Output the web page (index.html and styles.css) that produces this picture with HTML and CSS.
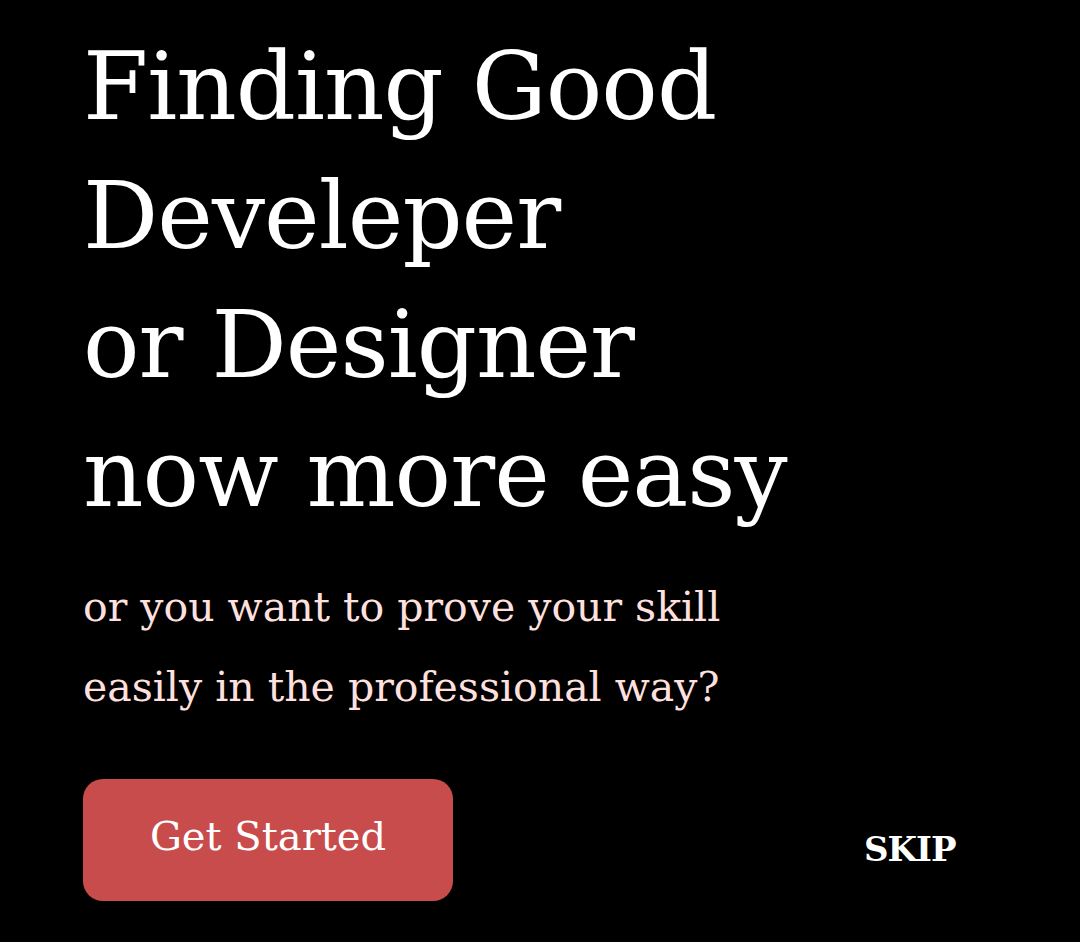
FILE: index.html
```html
<!DOCTYPE html>
<html>
<head>
<meta charset="utf-8">
<link rel="stylesheet" href="styles.css">
</head>
<body>
<main class="screen">
  <h1 class="headline">Finding Good<br>Develeper<br>or Designer<br>now more easy</h1>
  <p class="subtitle">or you want to prove your skill<br>easily in the professional way?</p>
  <div class="actions">
    <button class="btn-start">Get Started</button>
    <button class="btn-skip">SKIP</button>
  </div>
</main>
</body>
</html>
```
FILE: styles.css
```css
html, body {
  margin: 0;
  padding: 0;
  background: #000;
}
.screen {
  width: 1080px;
  height: 942px;
  box-sizing: border-box;
  padding: 22px 0 0 83px;
  font-family: "Roboto Slab", "DejaVu Serif", serif;
  overflow: hidden;
}
.headline {
  margin: 0;
  color: #fff;
  font-weight: 400;
  font-size: 94px;
  line-height: 129px;
  letter-spacing: -1px;
}
.subtitle {
  margin: 29px 0 0;
  color: #ffe0df;
  font-size: 41px;
  line-height: 80px;
}
.actions {
  margin-top: 52px;
  display: flex;
  align-items: center;
}
.btn-start {
  width: 370px;
  height: 122px;
  border: none;
  border-radius: 20px;
  background: #c84c4c;
  color: #fff;
  font-family: inherit;
  font-size: 40px;
  padding: 0 0 8px;
}
.btn-skip {
  margin-left: 411px;
  margin-top: 18px;
  border: none;
  background: none;
  padding: 0;
  color: #fff;
  font-family: inherit;
  font-weight: 700;
  font-size: 34px;
  letter-spacing: -1px;
}
```
